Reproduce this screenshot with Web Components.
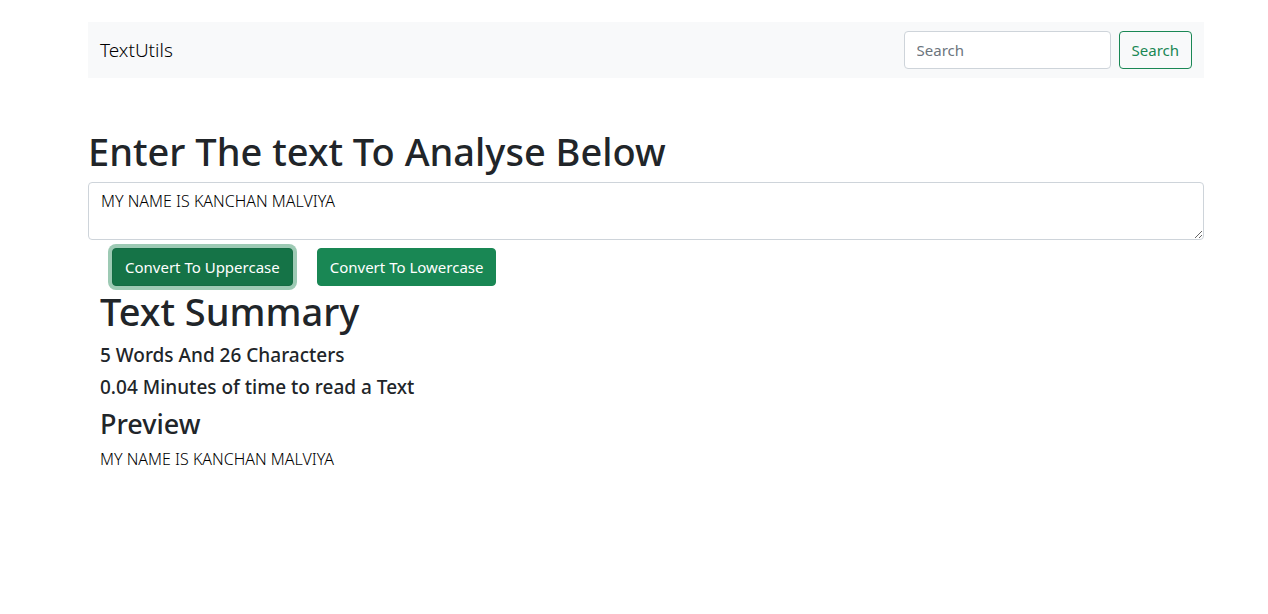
<!DOCTYPE html>
<html lang="en">
<head>
<meta charset="utf-8">
<meta name="viewport" content="width=device-width, initial-scale=1">
<title>TextUtils</title>
<style>
  body {
    margin: 0;
    background: #fff;
    color: #212529;
    font: 400 15px/24px "Noto Sans", "Open Sans", sans-serif;
  }
</style>
</head>
<body>
<text-utils-app></text-utils-app>

<script>
  const define = (name, html, setup) => {
    const template = document.createElement('template');
    template.innerHTML = '<style>*{box-sizing:border-box}</style>' + html;
    customElements.define(name, class extends HTMLElement {
      constructor() {
        super();
        this.attachShadow({ mode: 'open' }).append(template.content.cloneNode(true));
      }
      connectedCallback() {
        if (setup) setup(this, this.shadowRoot);
      }
    });
  };

  define('ui-button', `
    <style>
      :host { display: inline-block; }
      button {
        display: block; width: 100%; height: 38px; margin: 0; padding: 0 12px;
        border: 1px solid #198754; border-radius: 4px;
        background: #198754; color: #fff;
        font: inherit; white-space: nowrap; cursor: pointer;
      }
      :host([variant="outline"]) button { background: transparent; color: #198754; }
      :host([active]) button {
        background: #157347; border-color: #146c43;
        box-shadow: 0 0 0 4px #9dcab4;
      }
    </style>
    <button type="button"><slot></slot></button>`);

  define('nav-bar', `
    <style>
      :host { display: block; }
      nav {
        display: flex; align-items: center; justify-content: space-between;
        min-height: 56px; padding: 8px 12px; background: #f8f9fa;
      }
      a { color: #000; font-size: 19px; font-weight: 300; line-height: 32px; text-decoration: none; }
      form { display: flex; gap: 8px; }
      input {
        width: 207px; height: 38px; margin: 0; padding: 0 12px;
        border: 1px solid #ced4da; border-radius: 4px;
        background: #fff; color: #212529; font: inherit;
      }
      input::placeholder { color: #6c757d; opacity: 1; }
    </style>
    <nav>
      <a href="#"><slot></slot></a>
      <form role="search">
        <input type="search" placeholder="Search" aria-label="Search">
        <ui-button variant="outline">Search</ui-button>
      </form>
    </nav>`);

  define('text-form', `
    <style>
      :host { display: block; }
      h1 { margin: 0 0 6px; font-size: 38px; line-height: 50px; font-weight: 500; }
      label { display: block; }
      textarea {
        display: block; width: 100%; height: 58px; margin: 0; padding: 6px 12px;
        border: 1px solid #ced4da; border-radius: 4px; resize: vertical;
        background: #fff; color: #000; font: inherit; font-size: 16px; font-weight: 300; overflow: auto;
      }
      .actions { display: flex; gap: 24px; padding: 8px 24px 0; }
    </style>
    <h1><label for="source"><slot></slot></label></h1>
    <textarea id="source">MY NAME IS KANCHAN MALVIYA</textarea>
    <div class="actions">
      <ui-button id="upper" active>Convert To Uppercase</ui-button>
      <ui-button id="lower">Convert To Lowercase</ui-button>
    </div>`,
    (host, root) => {
      const box = root.getElementById('source');
      const notify = () => host.dispatchEvent(new CustomEvent('text-change', { detail: box.value, bubbles: true }));
      box.addEventListener('input', notify);
      root.getElementById('upper').addEventListener('click', () => { box.value = box.value.toUpperCase(); notify(); });
      root.getElementById('lower').addEventListener('click', () => { box.value = box.value.toLowerCase(); notify(); });
    });

  define('text-summary', `
    <style>
      :host { display: block; padding: 0 12px; }
      h1, h2, h3 { margin: 0 0 6px; font-weight: 500; }
      h1 { font-size: 38px; line-height: 50px; }
      h2 { font-size: 27px; line-height: 36px; }
      h3 { font-size: 19px; line-height: 26px; }
      p { margin: 0; color: #000; font-size: 16px; font-weight: 300; line-height: 22px; }
    </style>
    <h1>Text Summary</h1>
    <h3 id="counts">5 Words And 26 Characters</h3>
    <h3 id="time">0.04 Minutes of time to read a Text</h3>
    <h2>Preview</h2>
    <p id="preview">MY NAME IS KANCHAN MALVIYA</p>`);

  define('text-utils-app', `
    <style>
      :host { display: block; padding: 22px 64px 48px 88px; }
      text-form { margin-top: 48px; }
    </style>
    <nav-bar>TextUtils</nav-bar>
    <main>
      <text-form>Enter The text To Analyse Below</text-form>
      <text-summary></text-summary>
    </main>`,
    (host, root) => {
      const out = root.querySelector('text-summary').shadowRoot;
      root.addEventListener('text-change', ({ detail }) => {
        const words = detail.split(/\s+/).filter(Boolean).length;
        out.getElementById('counts').textContent = `${words} Words And ${detail.length} Characters`;
        out.getElementById('time').textContent = `${(words * 0.008).toFixed(2)} Minutes of time to read a Text`;
        out.getElementById('preview').textContent = detail;
      });
    });
</script>
</body>
</html>
